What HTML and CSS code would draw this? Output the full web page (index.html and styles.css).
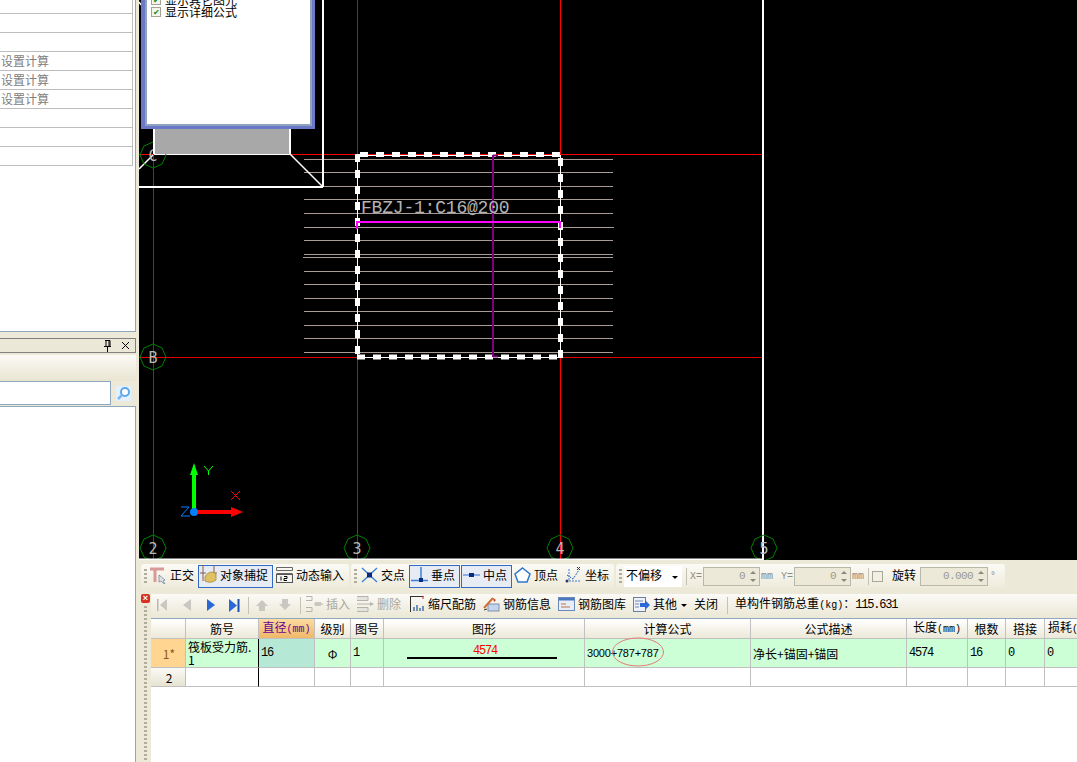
FILE: index.html
```html
<!DOCTYPE html>
<html lang="zh">
<head>
<meta charset="utf-8">
<title>钢筋编辑</title>
<link rel="stylesheet" href="styles.css">
</head>
<body>
<div class="app">
  <aside class="left">
    <div class="prop-panel">
      <div class="prop-row first"></div>
      <div class="prop-row"></div>
      <div class="prop-row"></div>
      <div class="prop-row">设置计算</div>
      <div class="prop-row">设置计算</div>
      <div class="prop-row">设置计算</div>
      <div class="prop-row"></div>
      <div class="prop-row"></div>
      <div class="prop-row"></div>
    </div>
    <div class="title-bar">
      <svg class="pin" width="9" height="12" viewBox="0 0 9 12"><path d="M2 .5h5M3 .5v6M6 .5v6M7 .5v6M1 6.5h7M4.5 7v5" fill="none" stroke="#000"/></svg>
      <svg class="close" width="9" height="9" viewBox="0 0 9 9"><path d="M1 1l7 7M8 1l-7 7" stroke="#000" fill="none"/></svg>
    </div>
    <div class="band"></div>
    <div class="search">
      <div class="search-input"></div>
      <svg class="search-icon" width="15" height="15" viewBox="0 0 15 15"><rect width="15" height="15" fill="#e4f0fb"/><circle cx="9" cy="6" r="4" fill="#fff" stroke="#5aa8ee" stroke-width="2"/><path d="M6 9l-4 4" stroke="#7ab8f0" stroke-width="2.5"/></svg>
    </div>
    <div class="tree"></div>
  </aside>

  <main class="right">
    <section class="canvas">
      <svg class="cad" width="938" height="560" viewBox="139 0 938 560">
        <rect x="139" y="0" width="938" height="560" fill="#000"/>
        <g stroke="#e00000" fill="none">
          <path d="M153.500 0V560M357.500 0V560M139 357.500H763"/>
        </g>
        <path d="M560.500 0V560M139 154.500H763" stroke="#ff0000" fill="none"/>
        <g stroke="#a89c94" fill="none">
          <path d="M304 159.500H613M304 172.500H613M304 186.500H613M304 199.500H613M304 213.500H613M304 227.500H614M304 240.500H613M304 254.500H613M303 257.500H613M304 271.500H613M304 284.500H613M304 298.500H613M304 311.500H613M304 325.500H613M304 338.500H613M304 352.500H613"/>
        </g>
        <g fill="none" stroke="#fff">
          <path d="M139 187H323M323 0V187M763 0V560" stroke-width="2"/>
          <path d="M290 154L323 187M153 155L139 169M139 2L141 5" stroke-width="1.500"/>
          <path d="M154 154H290" stroke-width="2"/>
          <path d="M357.500 155V357M560.500 155V357M357 155.500H560M357 357.500H560"/>
          <path d="M360 154.500H560" stroke-width="5" stroke-dasharray="8 8"/>
          <path d="M357.500 154V360" stroke-width="5" stroke-dasharray="8 8"/>
          <path d="M560.500 158V360" stroke-width="5" stroke-dasharray="8 8"/>
          <path d="M357 357H560" stroke-width="5" stroke-dasharray="8 8"/>
        </g>
        <path d="M493 155V357M493 155.500H498M493 356.500H498" stroke="#800080" stroke-width="2" fill="none"/>
        <path d="M357 229V222H560V228" stroke="#ff00ff" stroke-width="2" fill="none"/>
        <text class="cad-label" x="361" y="213">FBZJ-1:C16@200</text>
        <g fill="none" stroke="#008000">
          <polygon points="153,142 162,146 166,155 162,164 153,168 144,164 140,155 144,146"/>
          <polygon points="153,344 162,348 166,357 162,366 153,370 144,366 140,357 144,348"/>
          <polygon points="153,535 162,539 166,548 162,557 153,561 144,557 140,548 144,539"/>
          <polygon points="357,535 366,539 370,548 366,557 357,561 348,557 344,548 348,539"/>
          <polygon points="560,535 569,539 573,548 569,557 560,561 551,557 547,548 551,539"/>
          <polygon points="764,535 773,539 777,548 773,557 764,561 755,557 751,548 755,539"/>
        </g>
        <g class="axis-label">
          <text x="153" y="363">B</text>
          <text x="153" y="161">C</text>
          <text x="153" y="554">2</text>
          <text x="357" y="554">3</text>
          <text x="560" y="554">4</text>
          <text x="764" y="554">5</text>
        </g>
        <path d="M139 559.500H763" stroke="#fff" stroke-width="2"/>
        <path d="M194 510V475" stroke="#00ff00" stroke-width="4"/>
        <polygon points="194,463 198,475 190,475" fill="#00ff00"/>
        <path d="M198 512H232" stroke="#ff0000" stroke-width="4"/>
        <polygon points="231,507 236,509 243,512 236,515 231,517" fill="#ff0000"/>
        <circle cx="194" cy="512" r="4" fill="#0080ff"/>
        <path d="M204 466L208.500 471L213 466M208.500 471V475" stroke="#00ff00" fill="none"/>
        <path d="M231 491L240 500M240 491L231 500" stroke="#ff0000" fill="none"/>
        <path d="M181 507H189L181 516H190" stroke="#0080ff" fill="none"/>
      </svg>
      <div class="dialog">
        <label class="check-row"><span class="check">✔</span>显示其它图元</label>
        <label class="check-row"><span class="check">✔</span>显示详细公式</label>
      </div>
      <div class="dialog-foot"></div>
    </section>

    <section class="bottom">
      <div class="bar-one">
        <div class="group g1">
          <span class="grip ml3"></span>
          <span class="tool ml3"><svg width="17" height="18" viewBox="0 0 17 18"><path d="M0 3h14M5 3v13" stroke="#d89a98" stroke-width="3" fill="none"/><path d="M9 9l6 5-2 1 2 3-2-1-2-2-2 1z" fill="#dfe4ea" stroke="#6a7a90" stroke-width=".7"/></svg>正交</span>
          <span class="tool btn ml4"><svg width="17" height="20" viewBox="0 0 17 20"><path d="M3 0v16M14 0v16M0 8h6M11 8h6" stroke="#8a5a4a" fill="none"/><path d="M5 12q2-5 8-5l3 2v6q-5 4-11 1z" fill="#e0c060" stroke="#a88838" stroke-width=".8"/></svg>对象捕捉</span>
          <span class="tool ml3"><svg width="17" height="16" viewBox="0 0 17 16"><path d="M.5.500h16M.5 3.500h16M.5 6.500h16M.5.500v3M16.500.500v3" stroke="#666" fill="none"/><rect x=".5" y="7.500" width="16" height="8" fill="#f4f4f0" stroke="#555"/><path d="M5 9.500v4M8 9.500h3v2H8v2h3" stroke="#000" fill="none"/></svg>动态输入</span>
        </div>
        <div class="group g2">
          <span class="grip ml3"></span>
          <span class="tool ml4"><svg width="17" height="16" viewBox="0 0 17 16"><path d="M1 1l15 14M16 1L1 15" stroke="#3a80d8" stroke-width="1.300" fill="none"/><rect x="6" y="5.500" width="5" height="5" fill="#0a2a80"/></svg>交点</span>
          <span class="tool btn ml4"><svg width="17" height="16" viewBox="0 0 17 16"><path d="M10 0v15" stroke="#3a80d8" stroke-width="1.500" fill="none"/><path d="M0 13.500h17" stroke="#3a80d8" stroke-width="1.500" fill="none"/><rect x="8" y="11" width="4" height="4" fill="#0a2a80"/></svg>垂点</span>
          <span class="tool btn ml1"><svg width="17" height="16" viewBox="0 0 17 16"><path d="M0 8h17" stroke="#6a9ae0" stroke-width="1.500" fill="none"/><rect x="6" y="6" width="5" height="4" fill="#0a2a80"/></svg>中点</span>
          <span class="tool ml2"><svg width="17" height="16" viewBox="0 0 17 16"><polygon points="8.500,1 16,7 13,15 4,15 1,7" fill="#fff" stroke="#2a78d0" stroke-width="1.500"/></svg>顶点</span>
          <span class="tool ml7"><svg width="17" height="18" viewBox="0 0 17 18"><path d="M4 3v12h12" stroke="#3a80d8" fill="none" stroke-dasharray="2 1"/><path d="M2 9l6 4 6-9" stroke="#2a60c0" fill="none" stroke-dasharray="2 1"/><path d="M12 1l3 3M15 1l-3 3" stroke="#333" fill="none"/><circle cx="2" cy="15" r="1.500" fill="#336"/></svg>坐标</span>
        </div>
        <div class="group g3">
          <span class="grip ml3"></span>
          <span class="select ml2">不偏移<i class="arrow"></i></span>
          <span class="sep ml4"></span>
          <span class="unit lbl ml3">X=</span>
          <span class="spin s57 ml2">0<span class="spin-btn"><i class="up"></i><i class="down"></i></span></span>
          <span class="unit ml1">mm</span>
          <span class="unit lbl ml8">Y=</span>
          <span class="spin s57 ml2">0<span class="spin-btn"><i class="up"></i><i class="down"></i></span></span>
          <span class="unit ml1">mm</span>
          <span class="sep ml4"></span>
          <span class="checkbox ml3"></span>
          <span class="text ml9">旋转</span>
          <span class="spin s68 ml4">0.000<span class="spin-btn"><i class="up"></i><i class="down"></i></span></span>
          <span class="unit ml2">°</span>
        </div>
      </div>

      <div class="lower">
        <div class="side">
          <span class="red-x">×</span>
          <span class="side-grip"></span>
        </div>
        <div class="content">
          <div class="bar-two">
            <svg class="ml6" width="10" height="12" viewBox="0 0 10 12"><path d="M.5 0v12" stroke="#b8b8b0" stroke-width="2"/><polygon points="10,0 3,6 10,12" fill="#c8c8c0"/></svg>
            <svg class="ml16" width="8" height="12" viewBox="0 0 8 12"><polygon points="8,0 0,6 8,12" fill="#c8c8c0"/></svg>
            <svg class="ml16" width="8" height="12" viewBox="0 0 8 12"><polygon points="0,0 8,6 0,12" fill="#2a68d8"/></svg>
            <svg class="ml14" width="11" height="13" viewBox="0 0 11 13"><polygon points="0,0 8,6.500 0,13" fill="#2a68d8"/><path d="M9.500 0v13" stroke="#1a50b0" stroke-width="2"/></svg>
            <span class="sep ml8"></span>
            <svg class="ml7" width="12" height="12" viewBox="0 0 12 12"><polygon points="6,1 12,7 9,7 9,12 3,12 3,7 0,7" fill="#c8c8c0"/></svg>
            <svg class="ml11" width="12" height="12" viewBox="0 0 12 12"><polygon points="6,11 12,5 9,5 9,0 3,0 3,5 0,5" fill="#c8c8c0"/></svg>
            <span class="sep ml9"></span>
            <span class="tool dim ml5"><svg width="17" height="16" viewBox="0 0 17 16"><path d="M0 .5h6v4H0M0 11.500h6v4H0M8 8h9" stroke="#b4b4ac" fill="none"/><rect x="9" y="6" width="6" height="4" fill="#c8c8c0"/></svg>插入</span>
            <span class="tool dim ml7"><svg width="17" height="16" viewBox="0 0 17 16"><path d="M0 .5h11v4H0M0 11.500h11v4H0" stroke="#b4b4ac" fill="#e4e4dc"/><path d="M0 8h14" stroke="#b4b4ac"/><polygon points="13,6 17,8 13,10" fill="#b4b4ac"/></svg>删除</span>
            <span class="tool ml9"><svg width="15" height="16" viewBox="0 0 15 16"><path d="M.5 0v16M.5.500h13" stroke="#333" fill="none"/><path d="M13 0v3" stroke="#c03030"/><path d="M4 15v-4M7 15v-6M10 15v-3M13 15v-5" stroke="#7090b8" stroke-width="2"/></svg>缩尺配筋</span>
            <span class="tool ml7"><svg width="17" height="16" viewBox="0 0 17 16"><rect x="5" y="8" width="11" height="7" fill="#c4d4ec" stroke="#8090b0"/><path d="M1 12L10 2" stroke="#d07030" stroke-width="2"/><path d="M10 2l3 2-2 2z" fill="#c04030"/><path d="M1 14l3-1" stroke="#333"/></svg>钢筋信息</span>
            <span class="tool ml7"><svg width="17" height="14" viewBox="0 0 17 14"><rect x=".5" y=".5" width="16" height="13" fill="#e8eef8" stroke="#6a88b8"/><rect x="1" y="1" width="15" height="2.500" fill="#4a78c0"/><path d="M3 7h5M3 10h9" stroke="#c07040" fill="none"/></svg>钢筋图库</span>
            <span class="tool ml7"><svg width="17" height="15" viewBox="0 0 17 15"><rect x=".5" y=".5" width="12" height="14" fill="#eef2f8" stroke="#6a80a0"/><path d="M2 4h8M2 7h4M2 10h4" stroke="#7088a8"/><path d="M7 6h5V3l5 5-5 5v-3H7z" fill="#2a68d8"/></svg>其他</span>
            <i class="arrow small ml4"></i>
            <span class="text ml7">关闭</span>
            <span class="sep ml9"></span>
            <span class="text ml7">单构件钢筋总重<span class="tiny">(kg)</span>：<span class="num">115.631</span></span>
          </div>

          <div class="table-wrap">
            <table class="grid">
              <colgroup>
                <col class="c-head"><col class="c-no"><col class="c-dia"><col class="c-grade"><col class="c-fig"><col class="c-shape"><col class="c-formula"><col class="c-desc"><col class="c-len"><col class="c-count"><col class="c-lap"><col class="c-loss">
              </colgroup>
              <thead>
                <tr>
                  <th></th><th>筋号</th><th class="active">直径<span class="tiny">(mm)</span></th><th>级别</th><th>图号</th><th>图形</th><th>计算公式</th><th>公式描述</th><th>长度<span class="tiny">(mm)</span></th><th>根数</th><th>搭接</th><th class="left-head">损耗<span class="tiny">(</span></th>
                </tr>
              </thead>
              <tbody>
                <tr class="row-one">
                  <th class="row-head current">1*</th>
                  <td class="before-selected">筏板受力筋.<br>1</td>
                  <td class="num selected">16</td>
                  <td class="center">Φ</td>
                  <td class="num">1</td>
                  <td class="shape"><span class="shape-num">4574</span><span class="shape-line"></span></td>
                  <td class="formula">3000+787+787<svg class="mark" width="52" height="30" viewBox="0 0 52 30"><ellipse cx="26" cy="15" rx="25.500" ry="14" fill="none" stroke="#e87a78"/></svg></td>
                  <td>净长+锚固+锚固</td>
                  <td class="num">4574</td>
                  <td class="num">16</td>
                  <td class="num">0</td>
                  <td class="num">0</td>
                </tr>
                <tr class="row-two">
                  <th class="row-head">2</th>
                  <td class="before-selected"></td><td></td><td></td><td></td><td></td><td></td><td></td><td></td><td></td><td></td><td></td>
                </tr>
              </tbody>
            </table>
          </div>
        </div>
      </div>
    </section>
  </main>
</div>
</body>
</html>
```

FILE: styles.css
```css
* { box-sizing: border-box; }
html, body { margin: 0; padding: 0; height: 100%; overflow: hidden; }
body {
  width: 1077px;
  height: 762px;
  background: #ece9d8;
  font-family: "Noto Sans CJK SC", "Liberation Sans", sans-serif;
  font-size: 12px;
  color: #000;
}
.app { display: flex; width: 1077px; height: 762px; }

/* left column */
.left {
  width: 139px;
  flex: none;
  display: flex;
  flex-direction: column;
  padding-right: 3px;
}
.prop-panel {
  height: 332px;
  background: #fff;
  border-right: 1px solid #8fa6bf;
  border-bottom: 1px solid #8fa6bf;
  padding-right: 2px;
}
.prop-row {
  height: 19px;
  border-bottom: 1px solid #bdbdbd;
  border-right: 1px solid #bdbdbd;
  padding-left: 1px;
  line-height: 18px;
  color: #808080;
}
.prop-row.first { height: 14px; }
.title-bar {
  margin-top: 6px;
  height: 15px;
  background: #ebe8d8;
  border-top: 1px solid #808080;
  border-bottom: 1px solid #808080;
  border-right: 1px solid #808080;
  display: flex;
  align-items: center;
  justify-content: flex-end;
  gap: 9px;
  padding-right: 5px;
}
.band {
  margin-top: 2px;
  height: 26px;
  background: linear-gradient(#fbfaf5, #e9e5d2);
}
.search {
  height: 24px;
  display: flex;
  align-items: center;
  background: #ece9d8;
}
.search-input {
  width: 111px;
  height: 24px;
  background: #fff;
  border: 1px solid #8fa6bf;
  border-left: 0;
}
.search-icon { margin-left: 5px; }
.tree {
  flex: 1;
  margin-top: 1px;
  background: #fff;
  border-top: 1px solid #8fa6bf;
  border-right: 1px solid #8fa6bf;
}

/* right column */
.right {
  width: 938px;
  flex: none;
  display: flex;
  flex-direction: column;
  overflow: hidden;
}
.canvas {
  position: relative;
  height: 560px;
  flex: none;
  overflow: hidden;
  background: #000;
}
.cad { display: block; }
.cad-label {
  font-family: "Liberation Mono", monospace;
  font-size: 18px;
  letter-spacing: -0.2px;
  fill: #b4b4b4;
}
.axis-label text {
  font-family: "DejaVu Sans Mono", monospace;
  font-size: 15px;
  text-anchor: middle;
  fill: #b8b8b8;
}
.dialog {
  position: absolute;
  left: 2px;
  top: -10px;
  width: 174px;
  height: 139px;
  background: #fff;
  border: solid #6b78c8;
  border-width: 0 3px 3px 4px;
  box-shadow: inset 0 0 0 2px #8fa3bc;
  padding: 4px 0 0 6px;
  line-height: 12px;
}
.check-row { display: flex; align-items: center; height: 12px; }
.check {
  width: 10px;
  height: 10px;
  margin-right: 4px;
  background: #f4f3ec;
  border: 1px solid #a5a290;
  color: #109010;
  font-size: 8px;
  line-height: 8px;
  text-align: center;
  overflow: hidden;
}
.dialog-foot {
  position: absolute;
  left: 14px;
  top: 129px;
  width: 138px;
  height: 25px;
  background: #a8a8a8;
  border: solid #fff;
  border-width: 0 2px 0 2px;
}

/* bottom */
.bottom { flex: 1; display: flex; flex-direction: column; min-height: 0; }
.bar-one { display: flex; padding: 4px 0 0 2px; gap: 2px; height: 34px; flex: none; }
.group {
  display: flex;
  align-items: center;
  height: 24px;
  border-radius: 3px;
  background: linear-gradient(#fbfaf5, #eeebdc);
  white-space: nowrap;
  flex: none;
}
.g1 { width: 208px; }
.g2 { width: 263px; }
.g3 { width: 389px; }
.grip {
  width: 3px;
  height: 15px;
  flex: none;
  background: repeating-linear-gradient(#b0ad9c 0 2px, transparent 2px 4px);
}
.tool { display: flex; align-items: center; gap: 3px; flex: none; white-space: nowrap; line-height: 16px; padding-bottom: 2px; }
.tool.dim { color: #a8a8a0; }
.text { flex: none; white-space: nowrap; line-height: 16px; padding-bottom: 2px; }
.btn {
  height: 23px;
  padding: 0 4px 2px 1px;
  border: 1px solid #316ac5;
  background: #e7ecf4;
}
.select {
  position: relative;
  display: block;
  width: 58px;
  height: 21px;
  background: #fff;
  padding-left: 2px;
  line-height: 17px;
}
.select .arrow { position: absolute; right: 4px; top: 10px; }
.arrow {
  display: block;
  width: 0;
  height: 0;
  flex: none;
  border-style: solid;
  border-width: 3px 3px 0;
  border-color: #000 transparent transparent;
}
.sep { display: block; width: 1px; height: 17px; flex: none; background: #c4c2b2; }
.unit {
  font-family: "Liberation Mono", monospace;
  font-size: 10px;
  width: 12px;
  color: #8a8a80;
  flex: none;
  white-space: nowrap;
}
.lbl { width: 11px; }
.spin {
  position: relative;
  display: block;
  height: 19px;
  flex: none;
  border: 1px solid #b8b8a8;
  background: #ece9d8;
  color: #9a9a90;
  font-family: "Liberation Mono", monospace;
  font-size: 11px;
  line-height: 17px;
  text-align: right;
  padding-right: 14px;
  letter-spacing: -0.6px;
}
.s57 { width: 57px; }
.s68 { width: 68px; }
.spin-btn {
  position: absolute;
  right: 1px;
  top: 1px;
  width: 11px;
  height: 15px;
  display: flex;
  flex-direction: column;
  justify-content: space-between;
  align-items: center;
  padding: 2px 0;
}
.up, .down {
  display: block;
  width: 0;
  height: 0;
  border-style: solid;
  border-color: transparent;
}
.up { border-width: 0 3px 3px; border-bottom-color: #8a8a80; }
.down { border-width: 3px 3px 0; border-top-color: #8a8a80; }
.checkbox { display: block; width: 11px; height: 11px; flex: none; border: 1px solid #a8a898; background: #f2f0e4; }
.num { font-family: "Liberation Mono", monospace; font-size: 12px; letter-spacing: -1.2px; }
.tiny { font-family: "Liberation Mono", monospace; font-size: 10px; }

.ml1 { margin-left: 1px; } .ml2 { margin-left: 2px; } .ml3 { margin-left: 3px; }
.ml4 { margin-left: 4px; } .ml5 { margin-left: 5px; } .ml6 { margin-left: 6px; }
.ml7 { margin-left: 7px; } .ml8 { margin-left: 8px; } .ml9 { margin-left: 9px; }
.ml11 { margin-left: 11px; } .ml14 { margin-left: 14px; } .ml16 { margin-left: 16px; }

.lower { flex: 1; display: flex; min-height: 0; }
.side {
  width: 12px;
  flex: none;
  display: flex;
  flex-direction: column;
  align-items: flex-start;
  padding-left: 2px;
}
.red-x {
  width: 9px;
  height: 9px;
  border-radius: 2px;
  background: #d83020;
  color: #fff;
  font: bold 9px/9px "Liberation Sans", sans-serif;
  text-align: center;
}
.side-grip {
  flex: 1;
  width: 3px;
  margin: 3px 0 0 3px;
  background: repeating-linear-gradient(#b0ad9c 0 2px, transparent 2px 4px);
}
.content { flex: 1; min-width: 0; display: flex; flex-direction: column; }
.bar-two {
  display: flex;
  align-items: center;
  height: 22px;
  flex: none;
  background: linear-gradient(#fbfaf6, #ece9d8);
  white-space: nowrap;
}
.table-wrap {
  flex: 1;
  margin-top: 2px;
  background: #fff;
  border-top: 1px solid #8fa6bf;
  overflow: hidden;
}
.grid { table-layout: fixed; width: 927px; border-collapse: separate; border-spacing: 0; }
.c-head { width: 35px; } .c-no { width: 73px; } .c-dia { width: 56px; }
.c-grade { width: 36px; } .c-fig { width: 33px; } .c-shape { width: 201px; }
.c-formula { width: 166px; } .c-desc { width: 156px; } .c-len { width: 61px; }
.c-count { width: 38px; } .c-lap { width: 39px; } .c-loss { width: 33px; }
.grid th, .grid td {
  border-right: 1px solid #c0c0c0;
  border-bottom: 1px solid #c0c0c0;
  padding: 0 0 0 2px;
  overflow: hidden;
}
.grid thead th {
  height: 20px;
  font-weight: 400;
  text-align: center;
  line-height: 16px;
  white-space: nowrap;
  padding: 0;
  background: linear-gradient(#fff, #ece9d8);
}
.grid thead th.active { background: linear-gradient(#fbdca0, #f0b868); color: #660099; }
.grid thead th.left-head { text-align: left; padding-left: 3px; }
.row-one td { height: 29px; background: #ccffd6; line-height: 13px; }
.row-two td { height: 19px; background: #fff; }
.grid td.before-selected { border-right-color: #000; }
.grid td.selected { background: #b5e8d5; }
.row-head {
  font-weight: 400;
  text-align: center;
  background: linear-gradient(#fbfaf6, #e6e3d2);
}
.grid .row-head.current { background: #ffd591; color: #8a5a10; }
.grid td.center { text-align: center; padding: 0; }
.grid td.shape { position: relative; padding: 0; }
.shape-num {
  position: absolute;
  left: 89px;
  top: 6px;
  color: #ff0000;
  font-family: "Liberation Mono", monospace;
  font-size: 12px;
  letter-spacing: -1.2px;
  line-height: 12px;
}
.shape-line {
  position: absolute;
  left: 23px;
  top: 18px;
  width: 150px;
  height: 2px;
  background: #000;
}
.grid td.formula {
  position: relative;
  overflow: visible;
  font-family: "Liberation Sans", sans-serif;
  font-size: 11px;
  letter-spacing: -0.2px;
}
.mark { position: absolute; left: 27px; top: -2px; }
```
